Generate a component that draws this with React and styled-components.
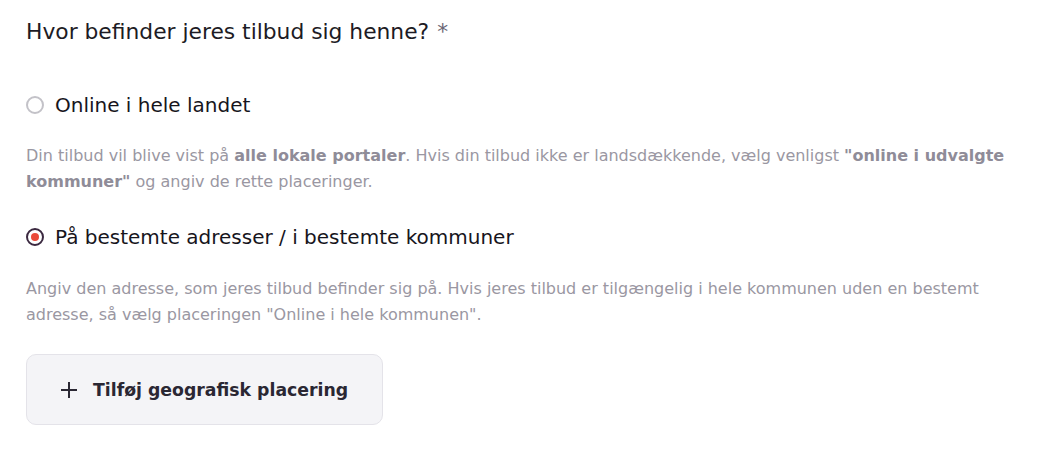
import styled, { createGlobalStyle } from "styled-components";

const GlobalStyle = createGlobalStyle`
  body {
    margin: 0;
    background: #ffffff;
    font-family: "DejaVu Sans", "Noto Sans", sans-serif;
  }
`;

const Wrapper = styled.div`
  padding: 18px 26px 24px 26px;
  width: 985px;
`;

const Title = styled.h2`
  margin: 0 0 46px 0;
  font-size: 21.8px;
  font-weight: 400;
  color: #1d1b24;
  line-height: 28px;
`;

const Star = styled.span`
  color: #6b6775;
  margin-left: 8px;
`;

const Option = styled.label`
  display: flex;
  align-items: center;
  gap: 11px;
  font-size: 20px;
  color: #17151c;
  line-height: 26px;
  cursor: pointer;
`;

const Radio = styled.span`
  box-sizing: border-box;
  flex: none;
  width: 18px;
  height: 18px;
  border-radius: 50%;
  border: 2px solid ${(p) => (p.$checked ? "#3b2940" : "#c3c2c8")};
  display: flex;
  align-items: center;
  justify-content: center;
  &::after {
    content: "";
    width: 8px;
    height: 8px;
    border-radius: 50%;
    background: #ea4a3a;
    display: ${(p) => (p.$checked ? "block" : "none")};
  }
`;

const Help = styled.p`
  margin: ${(p) => (p.$last ? "26px 0 26px" : "25px 0 29px")} 0;
  font-size: 16px;
  line-height: 26px;
  color: #9a97a2;
  b {
    font-weight: 700;
    color: #8f8c98;
  }
`;

const AddButton = styled.button`
  display: flex;
  align-items: center;
  gap: 15px;
  width: 357px;
  height: 71px;
  padding: 0 33px;
  border-radius: 10px;
  border: 1px solid #e4e3e9;
  background: #f4f4f7;
  font-family: inherit;
  font-size: 17.3px;
  font-weight: 700;
  color: #2a2733;
  cursor: pointer;
`;

const Plus = () => (
  <svg width="18" height="18" viewBox="0 0 18 18" fill="none">
    <path d="M9 1v16M1 9h16" stroke="#2a2733" strokeWidth="2" />
  </svg>
);

export default function App() {
  return (
    <>
      <GlobalStyle />
      <Wrapper>
        <Title>
          Hvor befinder jeres tilbud sig henne?<Star>*</Star>
        </Title>
        <Option>
          <Radio />
          Online i hele landet
        </Option>
        <Help>
          Din tilbud vil blive vist på <b>alle lokale portaler</b>. Hvis din tilbud ikke er
          landsdækkende, vælg venligst <b>"online i udvalgte kommuner"</b> og angiv de rette
          placeringer.
        </Help>
        <Option>
          <Radio $checked />
          På bestemte adresser / i bestemte kommuner
        </Option>
        <Help $last>
          Angiv den adresse, som jeres tilbud befinder sig på. Hvis jeres tilbud er
          tilgængelig i hele kommunen uden en bestemt adresse, så vælg placeringen "Online i
          hele kommunen".
        </Help>
        <AddButton>
          <Plus />
          Tilføj geografisk placering
        </AddButton>
      </Wrapper>
    </>
  );
}
